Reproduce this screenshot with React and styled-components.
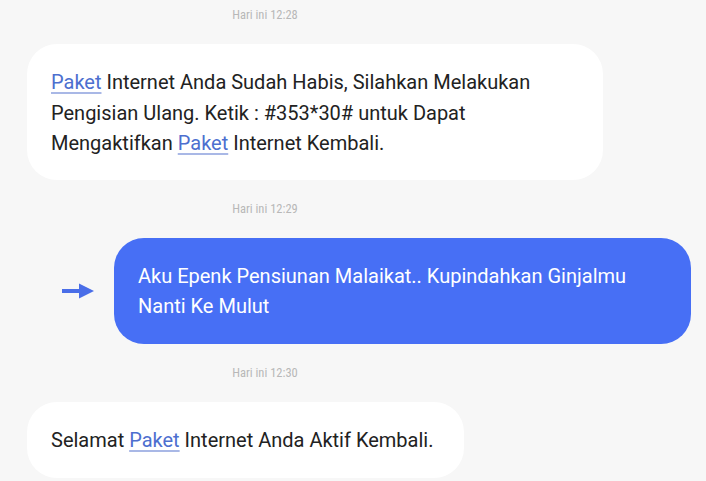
import React from 'react';
import styled, { createGlobalStyle } from 'styled-components';

const GlobalStyle = createGlobalStyle`
  body {
    margin: 0;
    background: #f7f7f7;
    font-family: Roboto, "Noto Sans", sans-serif;
  }
`;

const Thread = styled.div`
  display: flex;
  flex-direction: column;
  margin-top: -14px;
  width: 706px;
  height: 495px;
  overflow: hidden;
`;

const Stamp = styled.div`
  display: flex;
  justify-content: center;
  height: 58px;
  line-height: 58px;
  padding-right: 176px;
  font-size: 12.5px;
  font-stretch: 80%;
  color: #b8b8b8;
`;

const Row = styled.div`
  display: flex;
  align-items: center;
  padding-left: ${(p) => p.$left}px;
  gap: 19px;
`;

const Bubble = styled.div`
  box-sizing: border-box;
  width: ${(p) => p.$width}px;
  padding: ${(p) => p.$pad};
  border-radius: 30px;
  background: ${(p) => (p.$sent ? '#476ff5' : '#ffffff')};
  color: ${(p) => (p.$sent ? '#ffffff' : '#222222')};
  font-size: 20px;
  line-height: 30.5px;
`;

const Link = styled.span`
  color: #4d6fcf;
  text-decoration: underline;
  text-decoration-color: #a9b8e6;
  text-underline-offset: 3px;
`;

const Arrow = () => (
  <svg width="34" height="20" viewBox="0 0 34 20">
    <line x1="1" y1="10" x2="21" y2="10" stroke="#4a6ee8" strokeWidth="4" />
    <polygon points="18,2.5 33,10 18,17.5" fill="#4a6ee8" />
  </svg>
);

const App = () => {
  return (
    <>
      <GlobalStyle />
      <Thread>
        <Stamp>Hari ini 12:28</Stamp>
        <Row $left={27}>
          <Bubble $width={576} $pad="23px 24px 21px">
            <Link>Paket</Link> Internet Anda Sudah Habis, Silahkan Melakukan
            Pengisian Ulang. Ketik : #353*30# untuk Dapat Mengaktifkan{' '}
            <Link>Paket</Link> Internet Kembali.
          </Bubble>
        </Row>
        <Stamp>Hari ini 12:29</Stamp>
        <Row $left={61}>
          <Arrow />
          <Bubble $sent $width={577} $pad="23px 24px 22px">
            Aku Epenk Pensiunan Malaikat.. Kupindahkan Ginjalmu Nanti Ke Mulut
          </Bubble>
        </Row>
        <Stamp>Hari ini 12:30</Stamp>
        <Row $left={27}>
          <Bubble $width={437} $pad="23px 24px 23px">
            Selamat <Link>Paket</Link> Internet Anda Aktif Kembali.
          </Bubble>
        </Row>
      </Thread>
    </>
  );
};

export default App;
